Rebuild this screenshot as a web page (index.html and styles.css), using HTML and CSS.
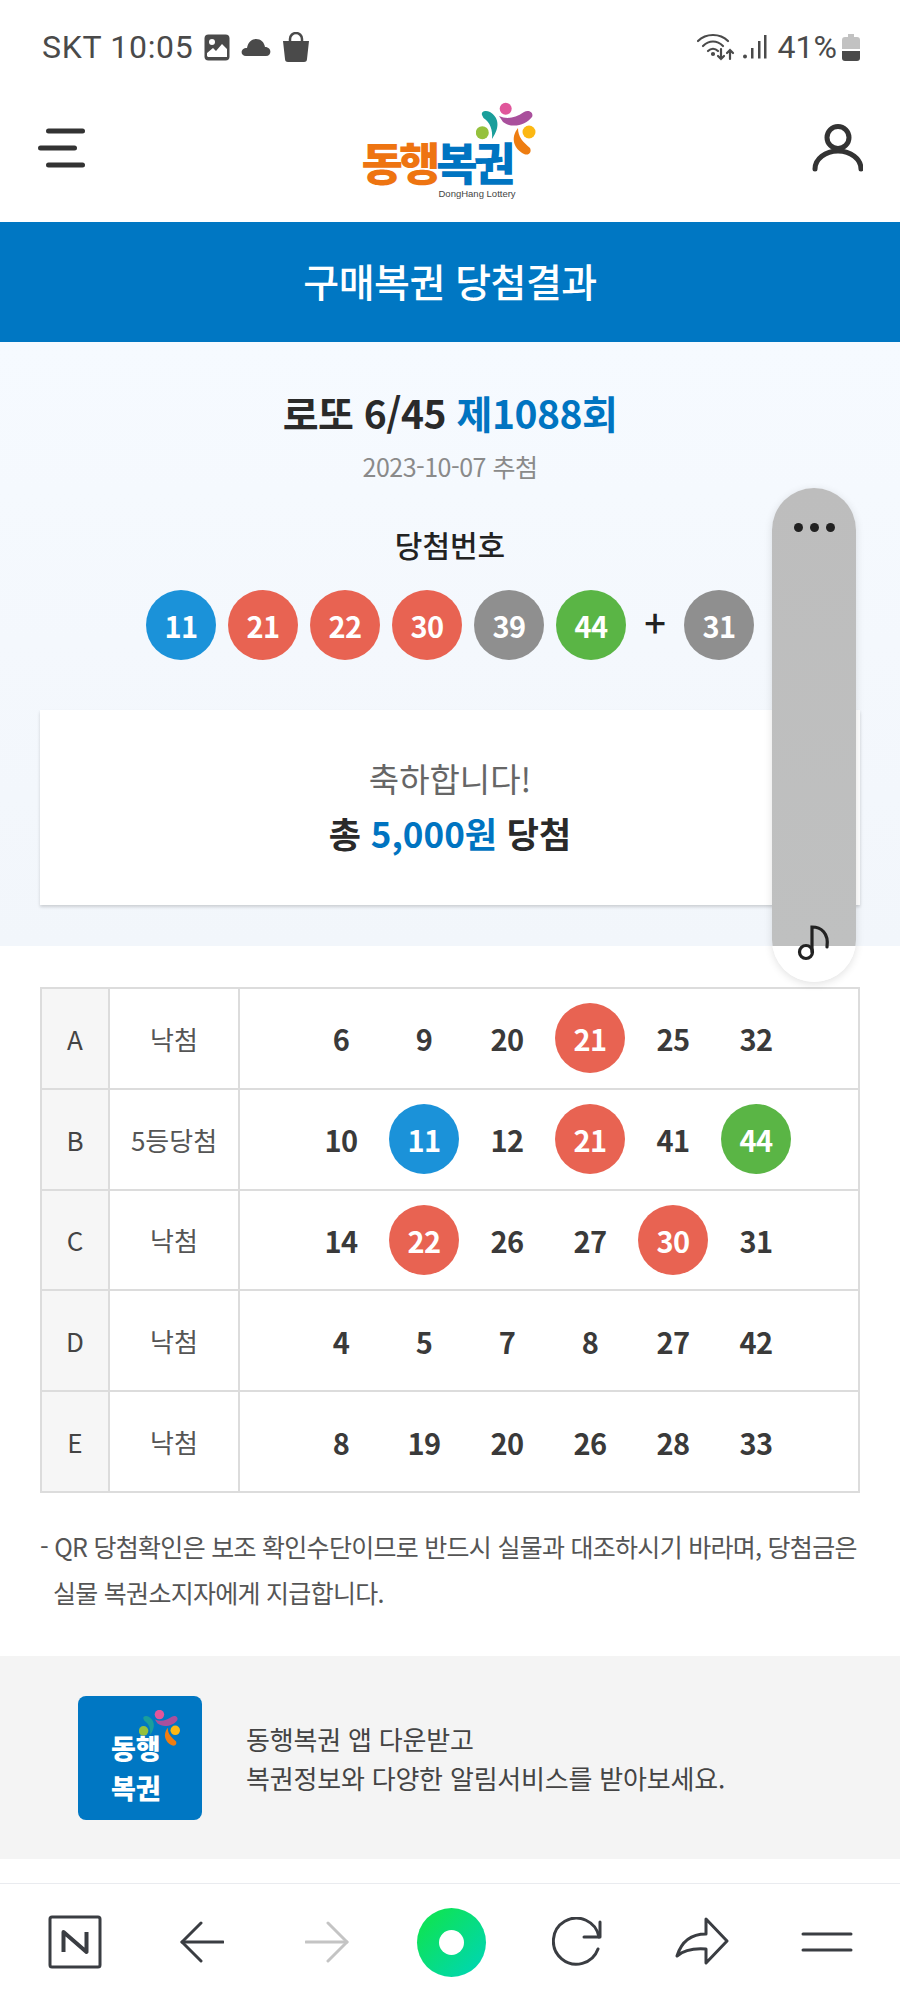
FILE: index.html
```html
<!DOCTYPE html>
<html lang="ko">
<head>
    <meta charset="UTF-8">
    <title>구매복권 당첨결과</title>
    <link rel="stylesheet" href="styles.css">
</head>
<body>
    <div class="page">
        <div class="status-bar">
            <div class="status-left">
                <span class="st-text">SKT 10:05</span>
                <svg class="st-icon" width="26" height="27" viewBox="0 0 26 27"><rect x="0.5" y="0.5" width="25" height="26" rx="4" fill="#4a4a4a"/><circle cx="8" cy="8" r="3" fill="#fff"/><path d="M3 22 L3 19 L9 14 L12 17 L18 10 L23 15 L23 23 L4 23 Z" fill="#fff"/></svg>
                <svg class="st-icon" width="30" height="17" viewBox="0 0 30 17"><path d="M5 17 C-1 17 -1 9 6 9 C7 3 11 0 15 0 C20 0 23 3 24 8 C31 8 31 17 25 17 Z" fill="#4a4a4a"/></svg>
                <svg class="st-icon" width="28" height="31" viewBox="0 0 28 31"><path d="M1 9 H27 L25 27 Q25 30 22 30 H6 Q3 30 3 27 Z" fill="#4a4a4a"/><path d="M8 12 V7 A6 6 0 0 1 20 7 V12" fill="none" stroke="#4a4a4a" stroke-width="2.5"/></svg>
            </div>
            <div class="status-right">
                <svg width="38" height="28" viewBox="0 0 38 28" fill="none" stroke="#4a4a4a" stroke-width="2.2" stroke-linecap="round"><path d="M1 8 C9 0 23 0 31 8"/><path d="M6 13 C12 7 20 7 26 13"/><path d="M11 18 C14 15 18 15 21 18"/><circle cx="16" cy="21" r="1" fill="#4a4a4a"/><path d="M24 16 V26 M21 23 L24 26 L27 23"/><path d="M33 26 V17 M30 20 L33 17 L36 20"/></svg>
                <svg width="24" height="24" viewBox="0 0 24 24" fill="#4a4a4a"><circle cx="2" cy="21.5" r="2"/><rect x="8" y="13" width="2.5" height="10.5"/><rect x="15" y="6" width="2.5" height="17.5"/><rect x="21" y="0" width="2.5" height="23.5"/></svg>
                <span class="st-pct">41%</span>
                <svg width="18" height="27" viewBox="0 0 18 27"><path d="M6 0 H12 V3 H15 Q18 3 18 6 V15 H0 V6 Q0 3 3 3 H6 Z" fill="#c2c2c2"/><path d="M0 17 H18 V24 Q18 27 15 27 H3 Q0 27 0 24 Z" fill="#4a4a4a"/></svg>
            </div>
        </div>

        <header class="top-header">
            <svg class="hd-icon" width="50" height="40" viewBox="0 0 50 40" fill="none" stroke="#333" stroke-width="5" stroke-linecap="round"><path d="M10.5 3 H44.5"/><path d="M2.5 20 H36.5"/><path d="M10.5 37 H44.5"/></svg>
            <div class="logo">
                <div class="logo-word"><span class="orange">동행</span><span class="blue">복권</span></div>
                <div class="logo-sub">DongHang Lottery</div>
                <svg class="logo-mark" width="64" height="56" viewBox="0 0 64 56">
                    <circle cx="29.7" cy="6.7" r="6" fill="#e0569b"/>
                    <path d="M23 14 C30 17 38 17 48 10 C53 7 58 11 56 15 C50 23 36 27 27 20 Z" fill="#a9509c"/>
                    <path d="M6 13 C5 9 10 8 14 10 C22 15 25 24 16 37 C17 28 14 20 7.5 16 Z" fill="#1a9e9b"/>
                    <circle cx="6.3" cy="30.7" r="6.5" fill="#95c13d"/>
                    <path d="M42 26 C34 36 38 47 48 52 C53 54 56 50 54 46 C47 40 42 35 42 26 Z" fill="#ee7d11"/>
                    <circle cx="53" cy="30" r="6.5" fill="#fcb813"/>
                </svg>
            </div>
            <svg class="hd-icon" width="52" height="50" viewBox="0 0 52 50" fill="none" stroke="#333" stroke-width="5" stroke-linecap="round"><circle cx="27" cy="14.5" r="11"/><path d="M4 46 A23 18 0 0 1 50 46"/></svg>
        </header>

        <div class="title-band">구매복권 당첨결과</div>

        <section class="result">
            <h2 class="round-title">로또 6/45 <span class="blue">제1088회</span></h2>
            <p class="draw-date">2023-10-07 추첨</p>
            <h3 class="win-label">당첨번호</h3>
            <div class="win-balls">
                <span class="ball blue-ball">11</span>
                <span class="ball red-ball">21</span>
                <span class="ball red-ball">22</span>
                <span class="ball red-ball">30</span>
                <span class="ball gray-ball">39</span>
                <span class="ball green-ball">44</span>
                <span class="plus">+</span>
                <span class="ball gray-ball">31</span>
            </div>
            <div class="congrats">
                <p class="congrats-top">축하합니다!</p>
                <p class="congrats-sum">총 <span class="blue">5,000원</span> 당첨</p>
            </div>
        </section>

        <section class="games">
            <table class="game-table">
                <tr>
                    <th>A</th>
                    <td class="state">낙첨</td>
                    <td><div class="nums"><span class="ball">6</span><span class="ball">9</span><span class="ball">20</span><span class="ball red-ball">21</span><span class="ball">25</span><span class="ball">32</span></div></td>
                </tr>
                <tr>
                    <th>B</th>
                    <td class="state">5등당첨</td>
                    <td><div class="nums"><span class="ball">10</span><span class="ball blue-ball">11</span><span class="ball">12</span><span class="ball red-ball">21</span><span class="ball">41</span><span class="ball green-ball">44</span></div></td>
                </tr>
                <tr>
                    <th>C</th>
                    <td class="state">낙첨</td>
                    <td><div class="nums"><span class="ball">14</span><span class="ball red-ball">22</span><span class="ball">26</span><span class="ball">27</span><span class="ball red-ball">30</span><span class="ball">31</span></div></td>
                </tr>
                <tr>
                    <th>D</th>
                    <td class="state">낙첨</td>
                    <td><div class="nums"><span class="ball">4</span><span class="ball">5</span><span class="ball">7</span><span class="ball">8</span><span class="ball">27</span><span class="ball">42</span></div></td>
                </tr>
                <tr>
                    <th>E</th>
                    <td class="state">낙첨</td>
                    <td><div class="nums"><span class="ball">8</span><span class="ball">19</span><span class="ball">20</span><span class="ball">26</span><span class="ball">28</span><span class="ball">33</span></div></td>
                </tr>
            </table>
            <p class="note">- QR 당첨확인은 보조 확인수단이므로 반드시 실물과 대조하시기 바라며, 당첨금은 실물 복권소지자에게 지급합니다.</p>
        </section>

        <section class="app-banner">
            <div class="app-logo">
                <div class="app-logo-text">동행<br>복권</div>
                <svg class="app-logo-mark" width="44" height="38" viewBox="0 0 64 56">
                    <circle cx="29.7" cy="6.7" r="7" fill="#e0569b"/>
                    <path d="M23 14 C30 17 38 17 48 10 C53 7 58 11 56 15 C50 23 36 27 27 20 Z" fill="#a9509c"/>
                    <path d="M6 13 C5 9 10 8 14 10 C22 15 25 24 16 37 C17 28 14 20 7.5 16 Z" fill="#1a9e9b"/>
                    <circle cx="6.3" cy="30.7" r="7" fill="#95c13d"/>
                    <path d="M42 26 C34 36 38 47 48 52 C53 54 56 50 54 46 C47 40 42 35 42 26 Z" fill="#ee7d11"/>
                    <circle cx="53" cy="30" r="7" fill="#fcb813"/>
                </svg>
            </div>
            <p class="app-text">동행복권 앱 다운받고<br>복권정보와 다양한 알림서비스를 받아보세요.</p>
        </section>

        <nav class="bottom-bar">
            <svg class="bar-n" width="54" height="54" viewBox="0 0 54 54" fill="none" stroke="#3a3d42" stroke-linejoin="round"><rect x="2" y="2" width="50" height="50" rx="2" stroke-width="3"/><path d="M15.5 37 V17 L38.5 37 V17" stroke-width="4"/></svg>
            <svg width="44" height="42" viewBox="0 0 44 42" fill="none" stroke="#3a3d42" stroke-width="3" stroke-linecap="round" stroke-linejoin="round"><path d="M43 21 H2"/><path d="M21 2 L2 21 L21 40"/></svg>
            <svg width="44" height="42" viewBox="0 0 44 42" fill="none" stroke="#c4c4c4" stroke-width="3" stroke-linecap="round" stroke-linejoin="round"><path d="M1 21 H42"/><path d="M23 2 L42 21 L23 40"/></svg>
            <div class="whale"><span class="whale-dot"></span></div>
            <svg width="50" height="50" viewBox="0 0 50 50" fill="none" stroke="#3a3d42" stroke-width="3" stroke-linecap="round" stroke-linejoin="round"><path d="M47 20 A23 23 0 1 0 46 32"/><path d="M32 20 H48 V5"/></svg>
            <svg width="54" height="50" viewBox="0 0 54 50" fill="none" stroke="#3a3d42" stroke-width="3" stroke-linecap="round" stroke-linejoin="round"><path d="M2 39 C6 26 14 17 31 17 V2 L52 24 L31 46 V32 C18 31 9 33 2 39 Z"/></svg>
            <svg width="52" height="22" viewBox="0 0 52 22" fill="none" stroke="#3a3d42" stroke-width="3" stroke-linecap="round"><path d="M2 3 H50"/><path d="M2 19 H50"/></svg>
        </nav>

        <aside class="side-panel">
            <div class="side-dots"><i></i><i></i><i></i></div>
            <svg width="34" height="36" viewBox="0 0 34 36" fill="none" stroke="#222" stroke-width="3.2" stroke-linecap="round"><circle cx="9" cy="27" r="6.5"/><path d="M15 27 V2 C24 2 32 8 30 22"/></svg>
        </aside>
    </div>
</body>
</html>
```

FILE: styles.css
```css
* {
    box-sizing: border-box;
}

body {
    margin: 0;
    font-family: "Noto Sans CJK KR", "Noto Sans", sans-serif;
    color: #222;
    background-color: #fff;
}

p, h2, h3 {
    margin: 0;
}

.page {
    position: relative;
    width: 900px;
    height: 2000px;
    display: flex;
    flex-direction: column;
    overflow: hidden;
}

.blue {
    color: #0074c1;
}

.orange {
    color: #ee7411;
}

/* status bar */
.status-bar {
    height: 85px;
    padding: 27px 40px 0 42px;
    display: flex;
    justify-content: space-between;
    align-items: flex-start;
    font-family: Roboto, sans-serif;
    font-size: 32px;
    line-height: 40px;
    color: #4a4a4a;
}

.status-left,
.status-right {
    display: flex;
    align-items: center;
    height: 40px;
}

.status-left {
    gap: 11px;
}

.status-right {
    gap: 8px;
}

.st-text {
    letter-spacing: 0.7px;
}

.st-pct {
    margin: 0 -3px 0 3px;
}

/* header */
.top-header {
    height: 137px;
    padding: 0 37px 0 38px;
    display: flex;
    justify-content: space-between;
    align-items: center;
}

.hd-icon {
    margin-bottom: 11px;
}

.logo {
    position: relative;
    width: 180px;
    height: 100px;
    margin-top: 2px;
}

.logo-word {
    margin: 31px 0 0 2px;
    font-size: 45px;
    font-weight: 900;
    line-height: 52px;
    letter-spacing: -4px;
}

.logo-sub {
    margin: 0 0 0 79px;
    font-family: "Liberation Sans", sans-serif;
    font-size: 9.5px;
    line-height: 11px;
    color: #444;
}

.logo-mark {
    position: absolute;
    top: -3px;
    right: 0;
}

.title-band {
    height: 120px;
    padding-bottom: 4px;
    display: flex;
    align-items: center;
    justify-content: center;
    background-color: #0077c3;
    color: #fff;
    font-size: 39px;
    font-weight: 500;
    letter-spacing: -0.5px;
}

/* result */
.result {
    height: 604px;
    padding: 42px 40px 0;
    background: linear-gradient(#f6faff, #f2f6fb);
    text-align: center;
}

.round-title {
    font-size: 39px;
    font-weight: 700;
    line-height: 56px;
    letter-spacing: -0.5px;
    color: #2a2a2a;
}

.draw-date {
    margin-top: 8px;
    font-size: 25px;
    line-height: 36px;
    color: #8a8a8a;
    letter-spacing: -0.5px;
}

.win-label {
    margin-top: 38px;
    font-size: 30px;
    font-weight: 500;
    line-height: 44px;
}

.win-balls {
    margin-top: 24px;
    display: flex;
    justify-content: flex-start;
    align-items: center;
    gap: 12px;
    padding-left: 106px;
}

.ball {
    width: 70px;
    height: 70px;
    flex: none;
    border-radius: 50%;
    display: flex;
    align-items: center;
    justify-content: center;
    font-size: 29px;
    font-weight: 700;
    letter-spacing: -0.5px;
    color: #3a3a3a;
}

.blue-ball,
.red-ball,
.gray-ball,
.green-ball {
    color: #fff;
}

.blue-ball {
    background-color: #1b92d9;
}

.red-ball {
    background-color: #e86352;
}

.gray-ball {
    background-color: #8f8f8f;
}

.green-ball {
    background-color: #5ab545;
}

.plus {
    width: 34px;
    text-align: center;
    font-size: 38px;
    font-weight: 500;
    line-height: 50px;
    margin-top: -6px;
}

.congrats {
    margin-top: 50px;
    height: 195px;
    padding-top: 41px;
    background-color: #fff;
    box-shadow: 0 2px 3px rgba(0, 0, 0, 0.16);
}

.congrats-top {
    font-size: 33px;
    line-height: 54px;
    color: #666;
    margin-bottom: 1px;
}

.congrats-sum {
    font-size: 35px;
    font-weight: 700;
    line-height: 54px;
    color: #2a2a2a;
}

/* games table */
.games {
    padding: 41px 40px 0;
    height: 710px;
}

.game-table {
    width: 820px;
    height: 506px;
    border-collapse: collapse;
    table-layout: fixed;
    font-size: 26px;
    color: #555;
}

.game-table th,
.game-table td {
    border: 2px solid #dcdcdc;
    padding: 0;
    text-align: center;
    font-weight: 400;
}

.game-table th {
    width: 68px;
    background-color: #f6f6f6;
    color: #444;
}

.game-table .state {
    width: 130px;
}

.nums {
    display: flex;
    gap: 13px;
    padding-left: 66px;
}

.nums .ball {
    font-size: 29px;
}

.note {
    margin-top: 30px;
    padding-left: 13px;
    text-indent: -13px;
    font-size: 25px;
    line-height: 46px;
    letter-spacing: -0.72px;
    color: #555;
}

/* app banner */
.app-banner {
    height: 203px;
    padding-left: 78px;
    display: flex;
    align-items: center;
    gap: 44px;
    background-color: #f4f4f4;
}

.app-logo {
    position: relative;
    width: 124px;
    height: 124px;
    flex: none;
    padding: 32px 0 0 33px;
    border-radius: 8px;
    background-color: #0077c3;
}

.app-logo-text {
    font-size: 27px;
    font-weight: 900;
    line-height: 40px;
    color: #fff;
}

.app-logo-mark {
    position: absolute;
    top: 14px;
    right: 19px;
}

.app-text {
    font-size: 26px;
    line-height: 39px;
    letter-spacing: -0.2px;
    color: #444;
}

/* bottom browser bar */
.bottom-bar {
    position: absolute;
    left: 0;
    right: 0;
    bottom: 0;
    height: 117px;
    padding: 0 0 0 14px;
    display: grid;
    grid-template-columns: repeat(7, 125px);
    justify-items: center;
    align-items: center;
    background-color: #fff;
    border-top: 1px solid #e9ebef;
}

.bar-n {
    margin-right: 3px;
}

.whale {
    width: 69px;
    height: 69px;
    border-radius: 50%;
    display: flex;
    align-items: center;
    justify-content: center;
    background: linear-gradient(135deg, #0de25c 20%, #00d6b0 90%);
}

.whale-dot {
    width: 25px;
    height: 25px;
    border-radius: 50%;
    background-color: #fff;
}

/* floating side panel */
.side-panel {
    position: absolute;
    left: 772px;
    top: 488px;
    width: 84px;
    height: 494px;
    padding: 35px 0 21px;
    display: flex;
    flex-direction: column;
    justify-content: space-between;
    align-items: center;
    border-radius: 42px;
    background: linear-gradient(#bdbdbd 0, #bfc0c0 458px, #fff 458px);
    box-shadow: 0 2px 8px rgba(0, 0, 0, 0.12);
}

.side-dots {
    display: flex;
    gap: 7px;
}

.side-dots i {
    width: 9px;
    height: 9px;
    border-radius: 50%;
    background-color: #222;
}
```
